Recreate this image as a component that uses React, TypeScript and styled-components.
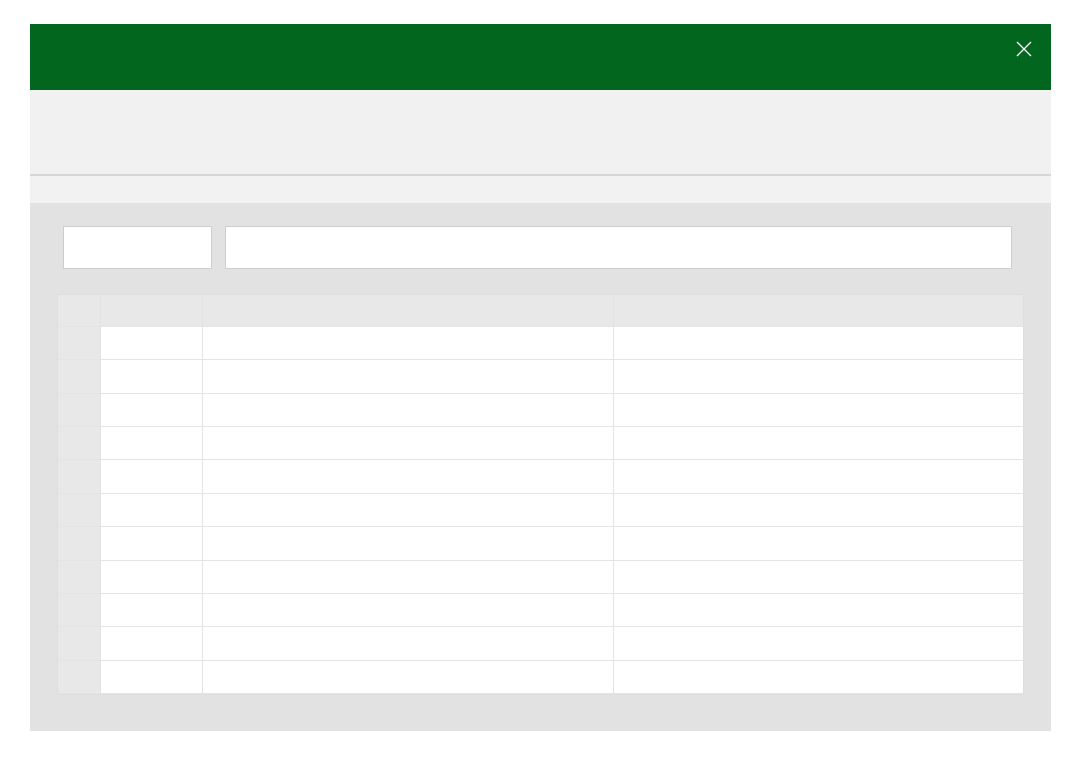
import styled, { createGlobalStyle } from 'styled-components';

const GlobalStyle = createGlobalStyle`
  html, body {
    margin: 0;
    padding: 0;
    background: #ffffff;
    font-family: "Segoe UI", "Open Sans", "Liberation Sans", sans-serif;
  }
`;

const Page = styled.div`
  padding: 24px 27px 27px 30px;
`;

const Window = styled.div`
  width: 1021px;
  display: flex;
  flex-direction: column;
`;

const TitleBar = styled.div`
  height: 66px;
  background: #02661e;
  display: flex;
  justify-content: flex-end;
  align-items: flex-start;
`;

const CloseButton = styled.button`
  width: 46px;
  height: 50px;
  border: none;
  background: transparent;
  padding: 0;
  display: flex;
  align-items: center;
  justify-content: center;
  cursor: pointer;
  margin-right: 4px;
`;

const Ribbon = styled.div`
  height: 84px;
  background: #f1f1f1;
  border-bottom: 2px solid #d6d6d6;
`;

const RibbonStrip = styled.div`
  height: 27px;
  background: #f2f2f2;
`;

const Workspace = styled.div`
  background: #e2e2e2;
  padding: 23px 27px 36px 27px;
  display: flex;
  flex-direction: column;
  gap: 25px;
`;

const FormulaRow = styled.div`
  display: flex;
  gap: 13px;
  padding: 0 12px 0 6px;
`;

const Field = styled.div<{ $width?: number }>`
  height: 43px;
  box-sizing: border-box;
  background: #ffffff;
  border: 1px solid #cdcdcd;
  ${p => (p.$width ? `width: ${p.$width}px;` : 'flex: 1;')}
`;

const Sheet = styled.div`
  display: grid;
  grid-template-columns: 43px 102px 411px 1fr;
  grid-template-rows: 32px repeat(11, 1fr);
  height: 401px;
  box-sizing: border-box;
  border: 1px solid #dedede;
  background: #e8e8e8;
`;

const Cell = styled.div<{ $head?: boolean }>`
  box-sizing: border-box;
  background: ${p => (p.$head ? '#e8e8e8' : '#ffffff')};
  border-right: 1px solid ${p => (p.$head ? '#e2e2e2' : '#e4e4e4')};
  border-bottom: 1px solid #e4e4e4;
  &:nth-child(4n) {
    border-right: none;
  }
`;

const CloseIcon = () => (
  <svg width="16" height="16" viewBox="0 0 16 16" fill="none">
    <path d="M1 1L15 15M15 1L1 15" stroke="#ffffff" strokeWidth="1.4" />
  </svg>
);

export default function App() {
  const rows = Array.from({ length: 11 }, (_, i) => i);
  const cols = [0, 1, 2, 3];

  return (
    <Page>
      <GlobalStyle />
      <Window>
        <TitleBar>
          <CloseButton aria-label="Close">
            <CloseIcon />
          </CloseButton>
        </TitleBar>
        <Ribbon />
        <RibbonStrip />
        <Workspace>
          <FormulaRow>
            <Field $width={149} />
            <Field />
          </FormulaRow>
          <Sheet>
            {cols.map(c => (
              <Cell key={`h${c}`} $head />
            ))}
            {rows.map(r =>
              cols.map(c => <Cell key={`${r}-${c}`} $head={c === 0} />)
            )}
          </Sheet>
        </Workspace>
      </Window>
    </Page>
  );
}
